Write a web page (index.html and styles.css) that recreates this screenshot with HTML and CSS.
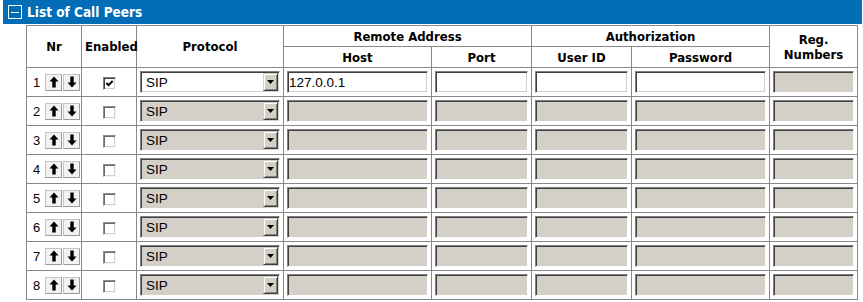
FILE: index.html
```html
<!DOCTYPE html>
<html lang="en">
  <head>
    <meta charset="UTF-8" />
    <title>List of Call Peers</title>
    <link rel="stylesheet" href="styles.css">
  </head>
  <body>
    <div class="panel">
      <div class="panel-title">
        <span class="toggle"><span class="toggle-bar"></span></span>
        List of Call Peers
      </div>

      <table class="peers">
        <colgroup>
          <col style="width: 55px" />
          <col style="width: 55px" />
          <col style="width: 147px" />
          <col style="width: 148px" />
          <col style="width: 100px" />
          <col style="width: 100px" />
          <col style="width: 138px" />
          <col style="width: 88px" />
        </colgroup>
        <thead>
          <tr>
            <th rowspan="2">Nr</th>
            <th rowspan="2">Enabled</th>
            <th rowspan="2">Protocol</th>
            <th colspan="2">Remote Address</th>
            <th colspan="2">Authorization</th>
            <th rowspan="2" class="reg">Reg.<br />Numbers</th>
          </tr>
          <tr>
            <th>Host</th>
            <th>Port</th>
            <th>User ID</th>
            <th>Password</th>
          </tr>
        </thead>
        <tbody>
          <tr>
            <td class="nr"><div class="nr-cell">
              <span class="num">1</span>
              <button class="move"><svg viewBox="0 0 14 14"><path d="M7 1.5L11.5 6.5H8.7V12.5H5.3V6.5H2.5Z" /></svg></button>
              <button class="move"><svg viewBox="0 0 14 14"><path d="M7 12.5L11.5 7.5H8.7V1.5H5.3V7.5H2.5Z" /></svg></button>
            </div></td>
            <td class="en"><span class="check"><svg viewBox="0 0 9 9"><path d="M1.3 4L3.5 6.2L7.7 2" /></svg></span></td>
            <td><div class="select"><span class="select-value">SIP</span><span class="select-btn"><svg viewBox="0 0 7 4"><path d="M0 0H7L3.5 4Z" /></svg></span></div></td>
            <td><input class="field" type="text" value="127.0.0.1" /></td>
            <td><input class="field" type="text" /></td>
            <td><input class="field" type="text" /></td>
            <td><input class="field" type="password" /></td>
            <td><input class="field" type="text" disabled /></td>
          </tr>
          <tr>
            <td class="nr"><div class="nr-cell">
              <span class="num">2</span>
              <button class="move"><svg viewBox="0 0 14 14"><path d="M7 1.5L11.5 6.5H8.7V12.5H5.3V6.5H2.5Z" /></svg></button>
              <button class="move"><svg viewBox="0 0 14 14"><path d="M7 12.5L11.5 7.5H8.7V1.5H5.3V7.5H2.5Z" /></svg></button>
            </div></td>
            <td class="en"><span class="check off"></span></td>
            <td><div class="select off"><span class="select-value">SIP</span><span class="select-btn"><svg viewBox="0 0 7 4"><path d="M0 0H7L3.5 4Z" /></svg></span></div></td>
            <td><input class="field" type="text" disabled /></td>
            <td><input class="field" type="text" disabled /></td>
            <td><input class="field" type="text" disabled /></td>
            <td><input class="field" type="password" disabled /></td>
            <td><input class="field" type="text" disabled /></td>
          </tr>
          <tr>
            <td class="nr"><div class="nr-cell">
              <span class="num">3</span>
              <button class="move"><svg viewBox="0 0 14 14"><path d="M7 1.5L11.5 6.5H8.7V12.5H5.3V6.5H2.5Z" /></svg></button>
              <button class="move"><svg viewBox="0 0 14 14"><path d="M7 12.5L11.5 7.5H8.7V1.5H5.3V7.5H2.5Z" /></svg></button>
            </div></td>
            <td class="en"><span class="check off"></span></td>
            <td><div class="select off"><span class="select-value">SIP</span><span class="select-btn"><svg viewBox="0 0 7 4"><path d="M0 0H7L3.5 4Z" /></svg></span></div></td>
            <td><input class="field" type="text" disabled /></td>
            <td><input class="field" type="text" disabled /></td>
            <td><input class="field" type="text" disabled /></td>
            <td><input class="field" type="password" disabled /></td>
            <td><input class="field" type="text" disabled /></td>
          </tr>
          <tr>
            <td class="nr"><div class="nr-cell">
              <span class="num">4</span>
              <button class="move"><svg viewBox="0 0 14 14"><path d="M7 1.5L11.5 6.5H8.7V12.5H5.3V6.5H2.5Z" /></svg></button>
              <button class="move"><svg viewBox="0 0 14 14"><path d="M7 12.5L11.5 7.5H8.7V1.5H5.3V7.5H2.5Z" /></svg></button>
            </div></td>
            <td class="en"><span class="check off"></span></td>
            <td><div class="select off"><span class="select-value">SIP</span><span class="select-btn"><svg viewBox="0 0 7 4"><path d="M0 0H7L3.5 4Z" /></svg></span></div></td>
            <td><input class="field" type="text" disabled /></td>
            <td><input class="field" type="text" disabled /></td>
            <td><input class="field" type="text" disabled /></td>
            <td><input class="field" type="password" disabled /></td>
            <td><input class="field" type="text" disabled /></td>
          </tr>
          <tr>
            <td class="nr"><div class="nr-cell">
              <span class="num">5</span>
              <button class="move"><svg viewBox="0 0 14 14"><path d="M7 1.5L11.5 6.5H8.7V12.5H5.3V6.5H2.5Z" /></svg></button>
              <button class="move"><svg viewBox="0 0 14 14"><path d="M7 12.5L11.5 7.5H8.7V1.5H5.3V7.5H2.5Z" /></svg></button>
            </div></td>
            <td class="en"><span class="check off"></span></td>
            <td><div class="select off"><span class="select-value">SIP</span><span class="select-btn"><svg viewBox="0 0 7 4"><path d="M0 0H7L3.5 4Z" /></svg></span></div></td>
            <td><input class="field" type="text" disabled /></td>
            <td><input class="field" type="text" disabled /></td>
            <td><input class="field" type="text" disabled /></td>
            <td><input class="field" type="password" disabled /></td>
            <td><input class="field" type="text" disabled /></td>
          </tr>
          <tr>
            <td class="nr"><div class="nr-cell">
              <span class="num">6</span>
              <button class="move"><svg viewBox="0 0 14 14"><path d="M7 1.5L11.5 6.5H8.7V12.5H5.3V6.5H2.5Z" /></svg></button>
              <button class="move"><svg viewBox="0 0 14 14"><path d="M7 12.5L11.5 7.5H8.7V1.5H5.3V7.5H2.5Z" /></svg></button>
            </div></td>
            <td class="en"><span class="check off"></span></td>
            <td><div class="select off"><span class="select-value">SIP</span><span class="select-btn"><svg viewBox="0 0 7 4"><path d="M0 0H7L3.5 4Z" /></svg></span></div></td>
            <td><input class="field" type="text" disabled /></td>
            <td><input class="field" type="text" disabled /></td>
            <td><input class="field" type="text" disabled /></td>
            <td><input class="field" type="password" disabled /></td>
            <td><input class="field" type="text" disabled /></td>
          </tr>
          <tr>
            <td class="nr"><div class="nr-cell">
              <span class="num">7</span>
              <button class="move"><svg viewBox="0 0 14 14"><path d="M7 1.5L11.5 6.5H8.7V12.5H5.3V6.5H2.5Z" /></svg></button>
              <button class="move"><svg viewBox="0 0 14 14"><path d="M7 12.5L11.5 7.5H8.7V1.5H5.3V7.5H2.5Z" /></svg></button>
            </div></td>
            <td class="en"><span class="check off"></span></td>
            <td><div class="select off"><span class="select-value">SIP</span><span class="select-btn"><svg viewBox="0 0 7 4"><path d="M0 0H7L3.5 4Z" /></svg></span></div></td>
            <td><input class="field" type="text" disabled /></td>
            <td><input class="field" type="text" disabled /></td>
            <td><input class="field" type="text" disabled /></td>
            <td><input class="field" type="password" disabled /></td>
            <td><input class="field" type="text" disabled /></td>
          </tr>
          <tr>
            <td class="nr"><div class="nr-cell">
              <span class="num">8</span>
              <button class="move"><svg viewBox="0 0 14 14"><path d="M7 1.5L11.5 6.5H8.7V12.5H5.3V6.5H2.5Z" /></svg></button>
              <button class="move"><svg viewBox="0 0 14 14"><path d="M7 12.5L11.5 7.5H8.7V1.5H5.3V7.5H2.5Z" /></svg></button>
            </div></td>
            <td class="en"><span class="check off"></span></td>
            <td><div class="select off"><span class="select-value">SIP</span><span class="select-btn"><svg viewBox="0 0 7 4"><path d="M0 0H7L3.5 4Z" /></svg></span></div></td>
            <td><input class="field" type="text" disabled /></td>
            <td><input class="field" type="text" disabled /></td>
            <td><input class="field" type="text" disabled /></td>
            <td><input class="field" type="password" disabled /></td>
            <td><input class="field" type="text" disabled /></td>
          </tr>
        </tbody>
      </table>
    </div>
  </body>
</html>
```

FILE: styles.css
```css
body {
  margin: 0;
  background-color: #fff;
  font-family: "DejaVu Sans Condensed", "DejaVu Sans", sans-serif;
  color: #000;
}

.panel {
  margin-left: 3px;
  width: 859px;
}

.panel-title {
  display: flex;
  align-items: center;
  height: 24px;
  background-color: #006db6;
  color: #fff;
  font-weight: bold;
  font-size: 13.5px;
}

.toggle {
  box-sizing: border-box;
  width: 14px;
  height: 14px;
  margin: 0 5px 0 5px;
  border: 1px solid #fff;
  display: flex;
  align-items: center;
  justify-content: center;
}

.toggle-bar {
  width: 8px;
  height: 1px;
  background-color: #fff;
}

.peers {
  margin: 1px 0 0 23px;
  width: 832px;
  table-layout: fixed;
  border-collapse: collapse;
}

.peers th,
.peers td {
  border: 1px solid #888;
  padding: 0 3px;
}

.peers th {
  height: 20px;
  font-size: 13px;
  font-weight: bold;
  text-align: center;
  line-height: 15px;
}

.peers td {
  height: 28px;
}

.peers td.nr {
  padding: 0;
}

.nr-cell {
  display: flex;
  align-items: center;
  padding-left: 6px;
}

.num {
  flex: none;
  width: 12px;
  font-family: "Liberation Sans", Arial, sans-serif;
  font-size: 13px;
}

.move {
  flex: none;
  box-sizing: border-box;
  width: 17px;
  height: 17px;
  padding: 0;
  margin: 0;
  border: 1px solid;
  border-color: #c4c4c4 #9a9a9a #9a9a9a #c4c4c4;
  background-color: #f2f2f2;
  display: flex;
  align-items: center;
  justify-content: center;
}

.move + .move {
  margin-left: 1px;
}

.move svg {
  flex: none;
  width: 14px;
  height: 14px;
  fill: #000;
}

.en {
  text-align: center;
}

.check {
  box-sizing: border-box;
  display: inline-flex;
  align-items: center;
  justify-content: center;
  width: 13px;
  height: 13px;
  vertical-align: middle;
  background-color: #fff;
  border: 1px solid;
  border-color: #808080 #fff #fff #808080;
  box-shadow: inset 1px 1px 0 #404040, inset -1px -1px 0 #d4d0c8;
}

.check.off {
  border-color: #8c8c8c #f4f4f4 #f4f4f4 #8c8c8c;
  box-shadow: inset 1px 1px 0 #6a6a6a, inset -1px -1px 0 #d4d0c8;
}

.check svg {
  width: 9px;
  height: 9px;
  fill: none;
  stroke: #000;
  stroke-width: 2;
}

.select {
  box-sizing: border-box;
  display: flex;
  align-items: stretch;
  height: 22px;
  background-color: #fff;
  border: 1px solid;
  border-color: #808080 #fff #fff #808080;
  box-shadow: inset 1px 1px 0 #404040, inset -1px -1px 0 #d4d0c8;
  padding: 1px;
  font-family: "Liberation Sans", Arial, sans-serif;
  font-size: 13.5px;
}

.select.off {
  background-color: #d4d0c8;
}

.select-value {
  flex: 1;
  display: flex;
  align-items: center;
  padding-left: 4px;
}

.select-btn {
  box-sizing: border-box;
  width: 15px;
  display: flex;
  align-items: center;
  justify-content: center;
  background-color: #d4d0c8;
  border: 1px solid;
  border-color: #d4d0c8 #404040 #404040 #d4d0c8;
  box-shadow: inset 1px 1px 0 #fff, inset -1px -1px 0 #808080;
}

.select-btn svg {
  width: 7px;
  height: 4px;
  fill: #000;
}

.field {
  box-sizing: border-box;
  display: block;
  width: 100%;
  height: 22px;
  margin: 0;
  padding: 0 0 0 1px;
  background-color: #fff;
  border: 1px solid;
  border-color: #808080 #fff #fff #808080;
  box-shadow: inset 1px 1px 0 #404040, inset -1px -1px 0 #d4d0c8;
  font-family: "Liberation Sans", Arial, sans-serif;
  font-size: 13.5px;
  color: #000;
  outline: none;
}

.field:disabled {
  background-color: #d4d0c8;
}
```
